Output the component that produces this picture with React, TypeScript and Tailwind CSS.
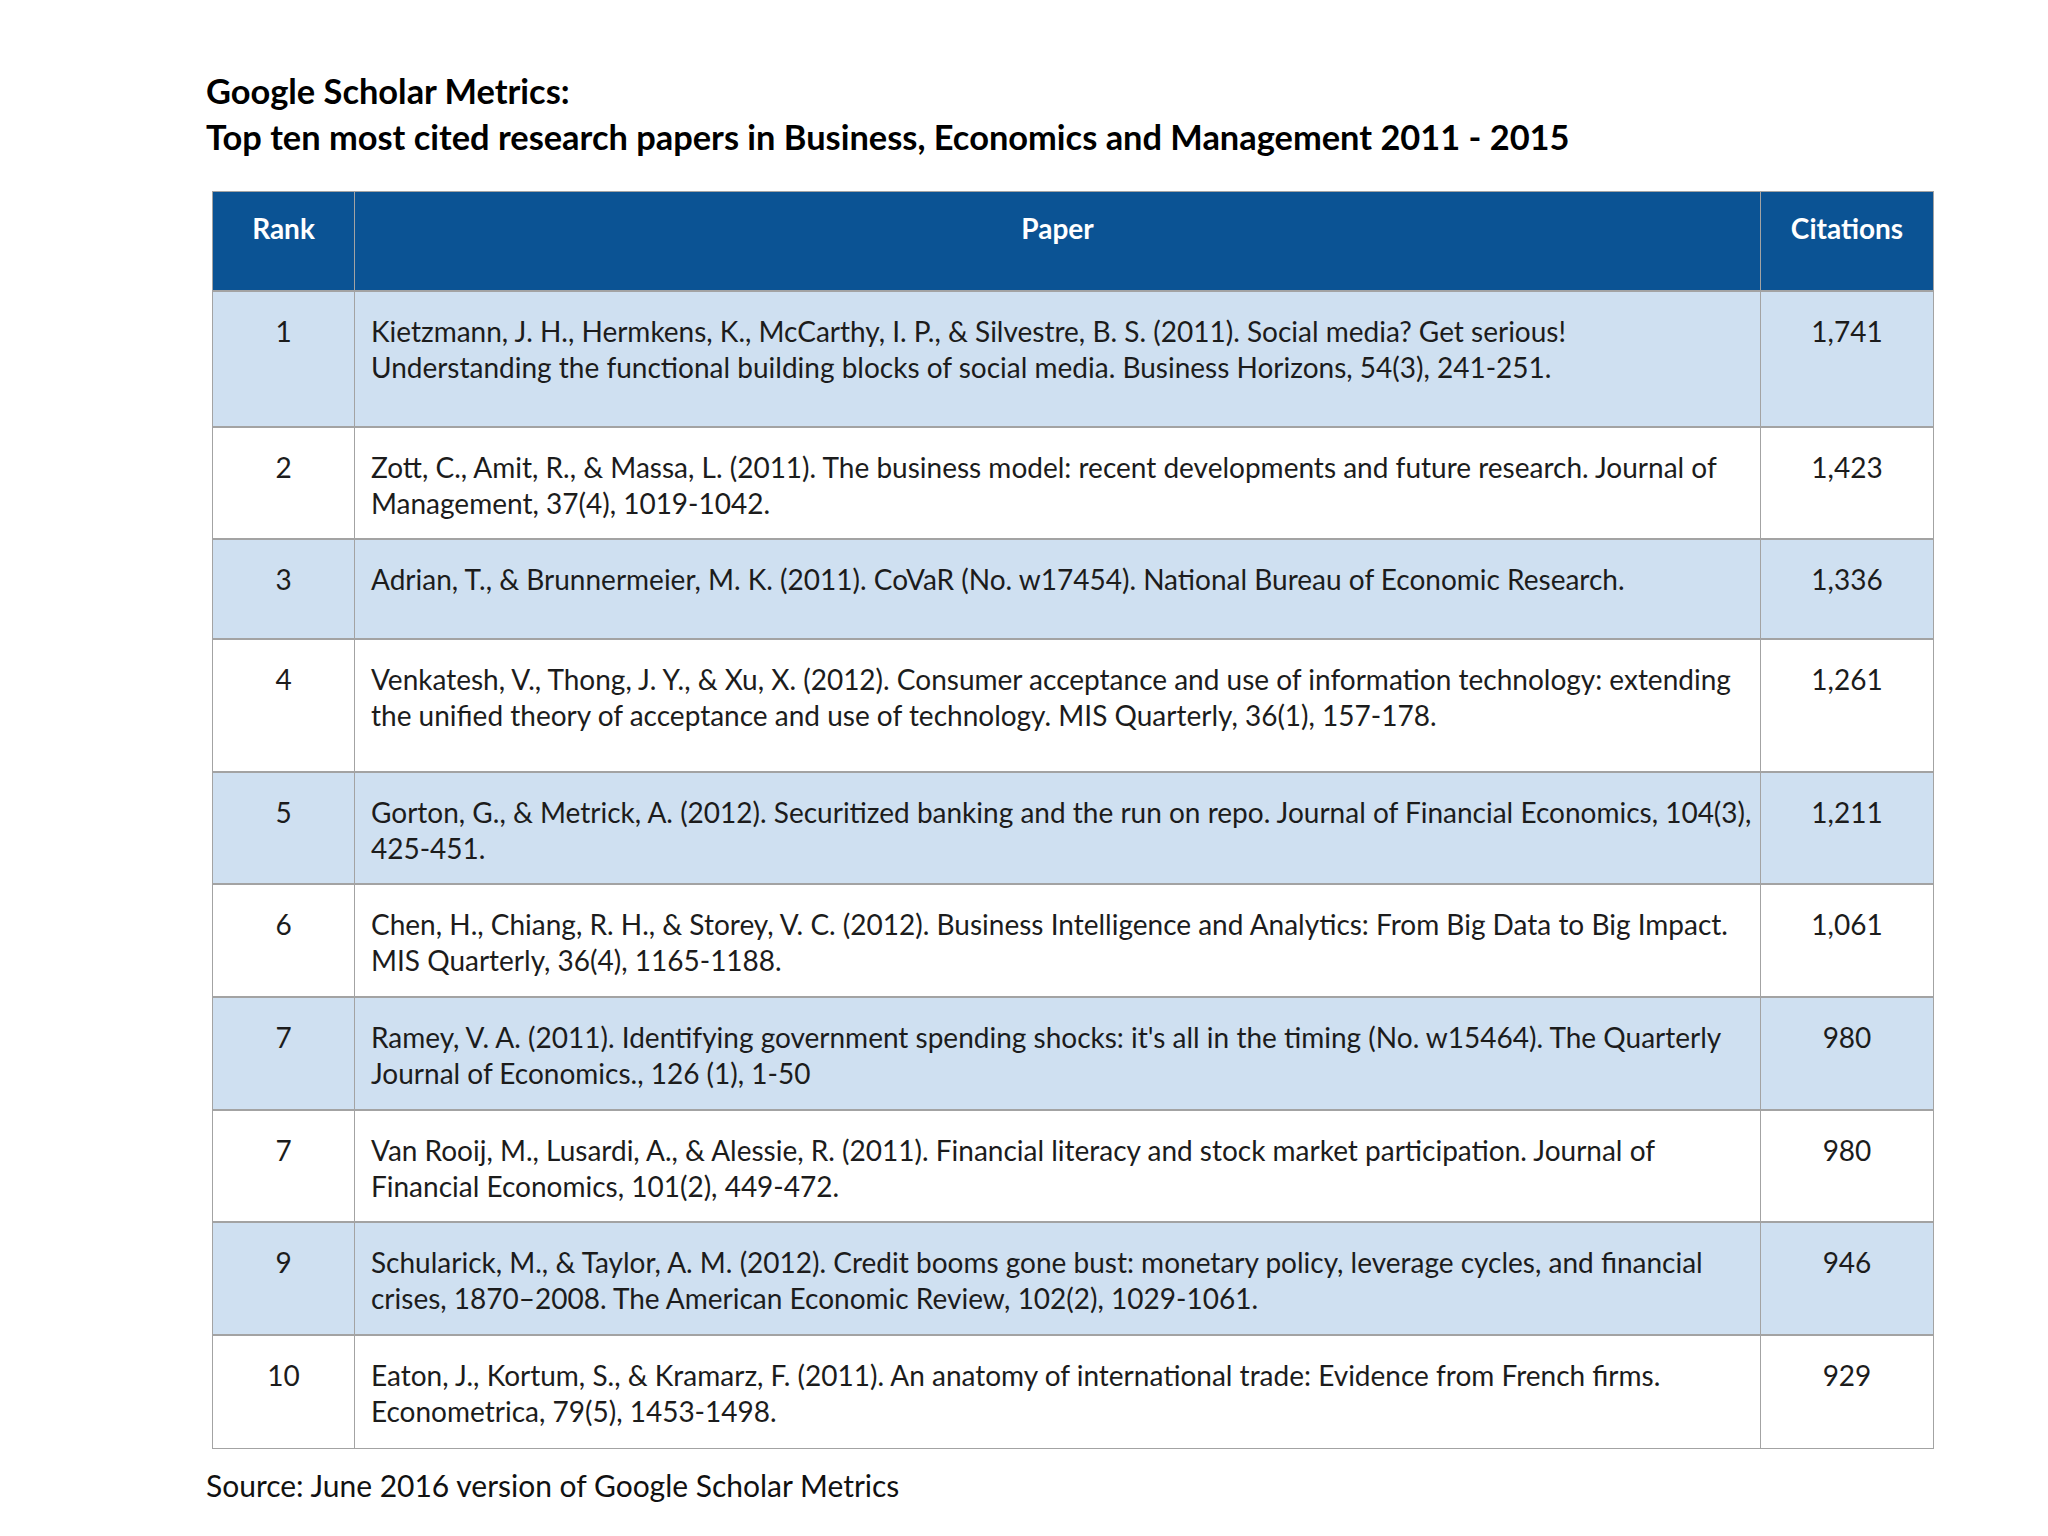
import React from "react";

type Row = {
  rank: string;
  lines: string[];
  citations: string;
  h: string;
  shaded: boolean;
};

const rows: Row[] = [
  {
    rank: "1",
    lines: [
      "Kietzmann, J. H., Hermkens, K., McCarthy, I. P., & Silvestre, B. S. (2011). Social media? Get serious!",
      "Understanding the functional building blocks of social media. Business Horizons, 54(3), 241-251.",
    ],
    citations: "1,741",
    h: "h-[136px]",
    shaded: true,
  },
  {
    rank: "2",
    lines: [
      "Zott, C., Amit, R., & Massa, L. (2011). The business model: recent developments and future research. Journal of",
      "Management, 37(4), 1019-1042.",
    ],
    citations: "1,423",
    h: "h-[112px]",
    shaded: false,
  },
  {
    rank: "3",
    lines: [
      "Adrian, T., & Brunnermeier, M. K. (2011). CoVaR (No. w17454). National Bureau of Economic Research.",
    ],
    citations: "1,336",
    h: "h-[100px]",
    shaded: true,
  },
  {
    rank: "4",
    lines: [
      "Venkatesh, V., Thong, J. Y., & Xu, X. (2012). Consumer acceptance and use of information technology: extending",
      "the unified theory of acceptance and use of technology. MIS Quarterly, 36(1), 157-178.",
    ],
    citations: "1,261",
    h: "h-[133px]",
    shaded: false,
  },
  {
    rank: "5",
    lines: [
      "Gorton, G., & Metrick, A. (2012). Securitized banking and the run on repo. Journal of Financial Economics, 104(3),",
      "425-451.",
    ],
    citations: "1,211",
    h: "h-[112px]",
    shaded: true,
  },
  {
    rank: "6",
    lines: [
      "Chen, H., Chiang, R. H., & Storey, V. C. (2012). Business Intelligence and Analytics: From Big Data to Big Impact.",
      "MIS Quarterly, 36(4), 1165-1188.",
    ],
    citations: "1,061",
    h: "h-[113px]",
    shaded: false,
  },
  {
    rank: "7",
    lines: [
      "Ramey, V. A. (2011). Identifying government spending shocks: it's all in the timing (No. w15464). The Quarterly",
      "Journal of Economics., 126 (1), 1-50",
    ],
    citations: "980",
    h: "h-[113px]",
    shaded: true,
  },
  {
    rank: "7",
    lines: [
      "Van Rooij, M., Lusardi, A., & Alessie, R. (2011). Financial literacy and stock market participation. Journal of",
      "Financial Economics, 101(2), 449-472.",
    ],
    citations: "980",
    h: "h-[112px]",
    shaded: false,
  },
  {
    rank: "9",
    lines: [
      "Schularick, M., & Taylor, A. M. (2012). Credit booms gone bust: monetary policy, leverage cycles, and financial",
      "crises, 1870\u20132008. The American Economic Review, 102(2), 1029-1061.",
    ],
    citations: "946",
    h: "h-[113px]",
    shaded: true,
  },
  {
    rank: "10",
    lines: [
      "Eaton, J., Kortum, S., & Kramarz, F. (2011). An anatomy of international trade: Evidence from French firms.",
      "Econometrica, 79(5), 1453-1498.",
    ],
    citations: "929",
    h: "h-[112px]",
    shaded: false,
  },
];

const App = () => {
  return (
    <div className="min-h-screen w-[2048px] bg-white pl-[206px] pt-[68px] font-['Lato','Liberation_Sans',sans-serif] text-[#1c1c1c]">
      {/* Title */}
      <h1 className="text-[34.4px] font-bold leading-[46px] text-black">
        <div>Google Scholar Metrics:</div>
        <div>Top ten most cited research papers in Business, Economics and Management 2011 - 2015</div>
      </h1>

      {/* Table */}
      <div className="mt-[31px] ml-[6px] w-[1722px] border border-[#a3a3a3]">
        <div className="flex h-[100px] border-b-2 border-[#a3a3a3] bg-[#0b5394] text-[28px] font-bold leading-[36px] text-white">
          <div className="flex w-[142px] shrink-0 justify-center border-r border-[#a3a3a3] pt-[18px]">Rank</div>
          <div className="flex flex-1 justify-center border-r border-[#a3a3a3] pt-[18px]">Paper</div>
          <div className="flex w-[172px] shrink-0 justify-center pt-[18px]">Citations</div>
        </div>
        {rows.map((row, i) => (
          <div
            key={i}
            className={`flex ${row.h} ${i < rows.length - 1 ? "border-b-2 border-[#a3a3a3]" : ""} ${
              row.shaded ? "bg-[#cfe0f1]" : "bg-white"
            } text-[28px] leading-[36px]`}
          >
            <div className="flex w-[142px] shrink-0 justify-center border-r border-[#a3a3a3] pt-[21px]">{row.rank}</div>
            <div className="flex-1 border-r border-[#a3a3a3] pl-[16px] pt-[21px]">
              {row.lines.map((l, j) => (
                <div key={j} className="whitespace-nowrap">
                  {l}
                </div>
              ))}
            </div>
            <div className="flex w-[172px] shrink-0 justify-center pt-[21px]">{row.citations}</div>
          </div>
        ))}
      </div>

      {/* Source */}
      <div className="mt-[16px] text-[30px] leading-[40px] text-[#111]">
        Source: June 2016 version of Google Scholar Metrics
      </div>
    </div>
  );
};

export default App;
